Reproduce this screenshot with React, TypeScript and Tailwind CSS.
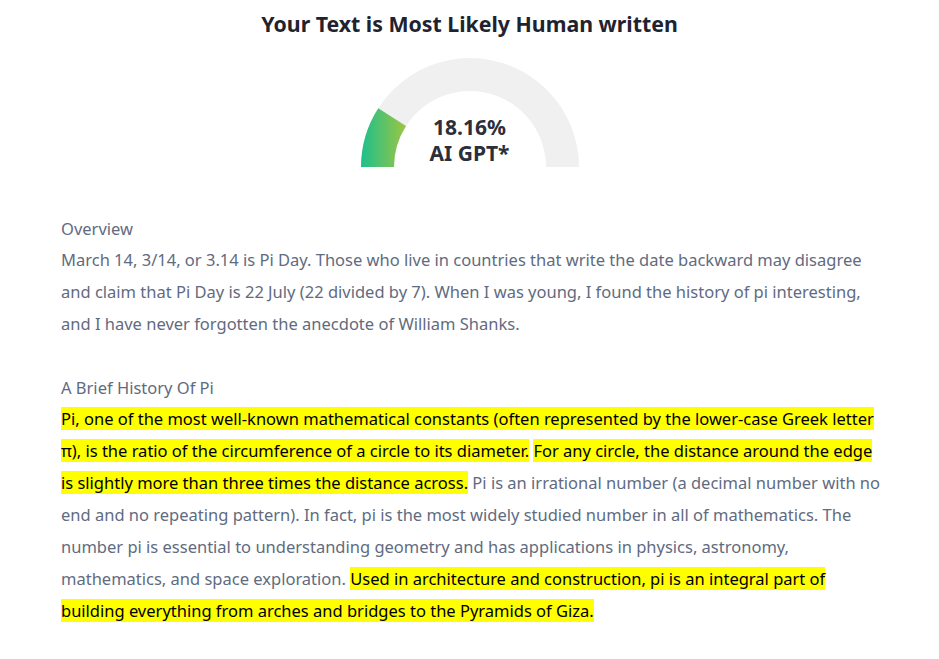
const Hl = ({ children }: { children: React.ReactNode }) => (
  <span className="bg-[#ffff00] text-black">{children}</span>
)

const Gauge = ({ value }: { value: number }) => {
  const cx = 110
  const cy = 110
  const ro = 109
  const ri = 76
  const a = Math.PI - (value / 100) * Math.PI
  const pt = (r: number, ang: number) => [cx + r * Math.cos(ang), cy - r * Math.sin(ang)]
  const [ox, oy] = pt(ro, a)
  const [ix, iy] = pt(ri, a)
  const track = `M ${cx - ro} ${cy} A ${ro} ${ro} 0 0 1 ${cx + ro} ${cy} L ${cx + ri} ${cy} A ${ri} ${ri} 0 0 0 ${cx - ri} ${cy} Z`
  const fill = `M ${cx - ro} ${cy} A ${ro} ${ro} 0 0 1 ${ox} ${oy} L ${ix} ${iy} A ${ri} ${ri} 0 0 0 ${cx - ri} ${cy} Z`
  return (
    <div className="relative w-[220px] h-[110px]">
      <svg width="220" height="110" viewBox="0 0 220 110">
        <defs>
          <linearGradient id="g" x1="0" y1="0" x2="1" y2="0">
            <stop offset="0%" stopColor="#1dbf8e" />
            <stop offset="100%" stopColor="#9cc641" />
          </linearGradient>
        </defs>
        <path d={track} fill="#f0f0f0" />
        <path d={fill} fill="url(#g)" />
      </svg>
      <div className="absolute inset-x-0 top-[57px] flex flex-col items-center text-[21px] font-bold leading-[26px] text-[#2b2f3a]">
        <span className="leading-[26px]">{value.toFixed(2)}%</span>
        <span className="leading-[26px]">AI GPT*</span>
      </div>
    </div>
  )
}

export default function App() {
  return (
    <div className="min-h-screen bg-white font-['Noto_Sans',sans-serif]">
      <div className="px-[61px] pt-[9px]">
        <h1 className="text-center text-[21.3px] font-bold leading-[29px] text-[#1f2330]">
          Your Text is Most Likely Human written
        </h1>
        <div className="mt-[19px] flex justify-center">
          <Gauge value={18.16} />
        </div>
        <div className="mt-[46px] whitespace-nowrap text-[16.5px] leading-[32px] text-[#5f6b80]">
          <p className="leading-[31px]">Overview</p>
          <p>
            March 14, 3/14, or 3.14 is Pi Day. Those who live in countries that write the date backward may disagree<br />
            and claim that Pi Day is 22 July (22 divided by 7). When I was young, I found the history of pi interesting,<br />
            and I have never forgotten the anecdote of William Shanks.
          </p>
          <p className="mt-[32px] leading-[31px]">A Brief History Of Pi</p>
          <p>
            <Hl>Pi, one of the most well-known mathematical constants (often represented by the lower-case Greek letter</Hl><br />
            <Hl>π), is the ratio of the circumference of a circle to its diameter.</Hl> <Hl>For any circle, the distance around the edge</Hl><br />
            <Hl>is slightly more than three times the distance across.</Hl> Pi is an irrational number (a decimal number with no<br />
            end and no repeating pattern). In fact, pi is the most widely studied number in all of mathematics. The<br />
            number pi is essential to understanding geometry and has applications in physics, astronomy,<br />
            mathematics, and space exploration. <Hl>Used in architecture and construction, pi is an integral part of</Hl><br />
            <Hl>building everything from arches and bridges to the Pyramids of Giza.</Hl>
          </p>
        </div>
      </div>
    </div>
  )
}
